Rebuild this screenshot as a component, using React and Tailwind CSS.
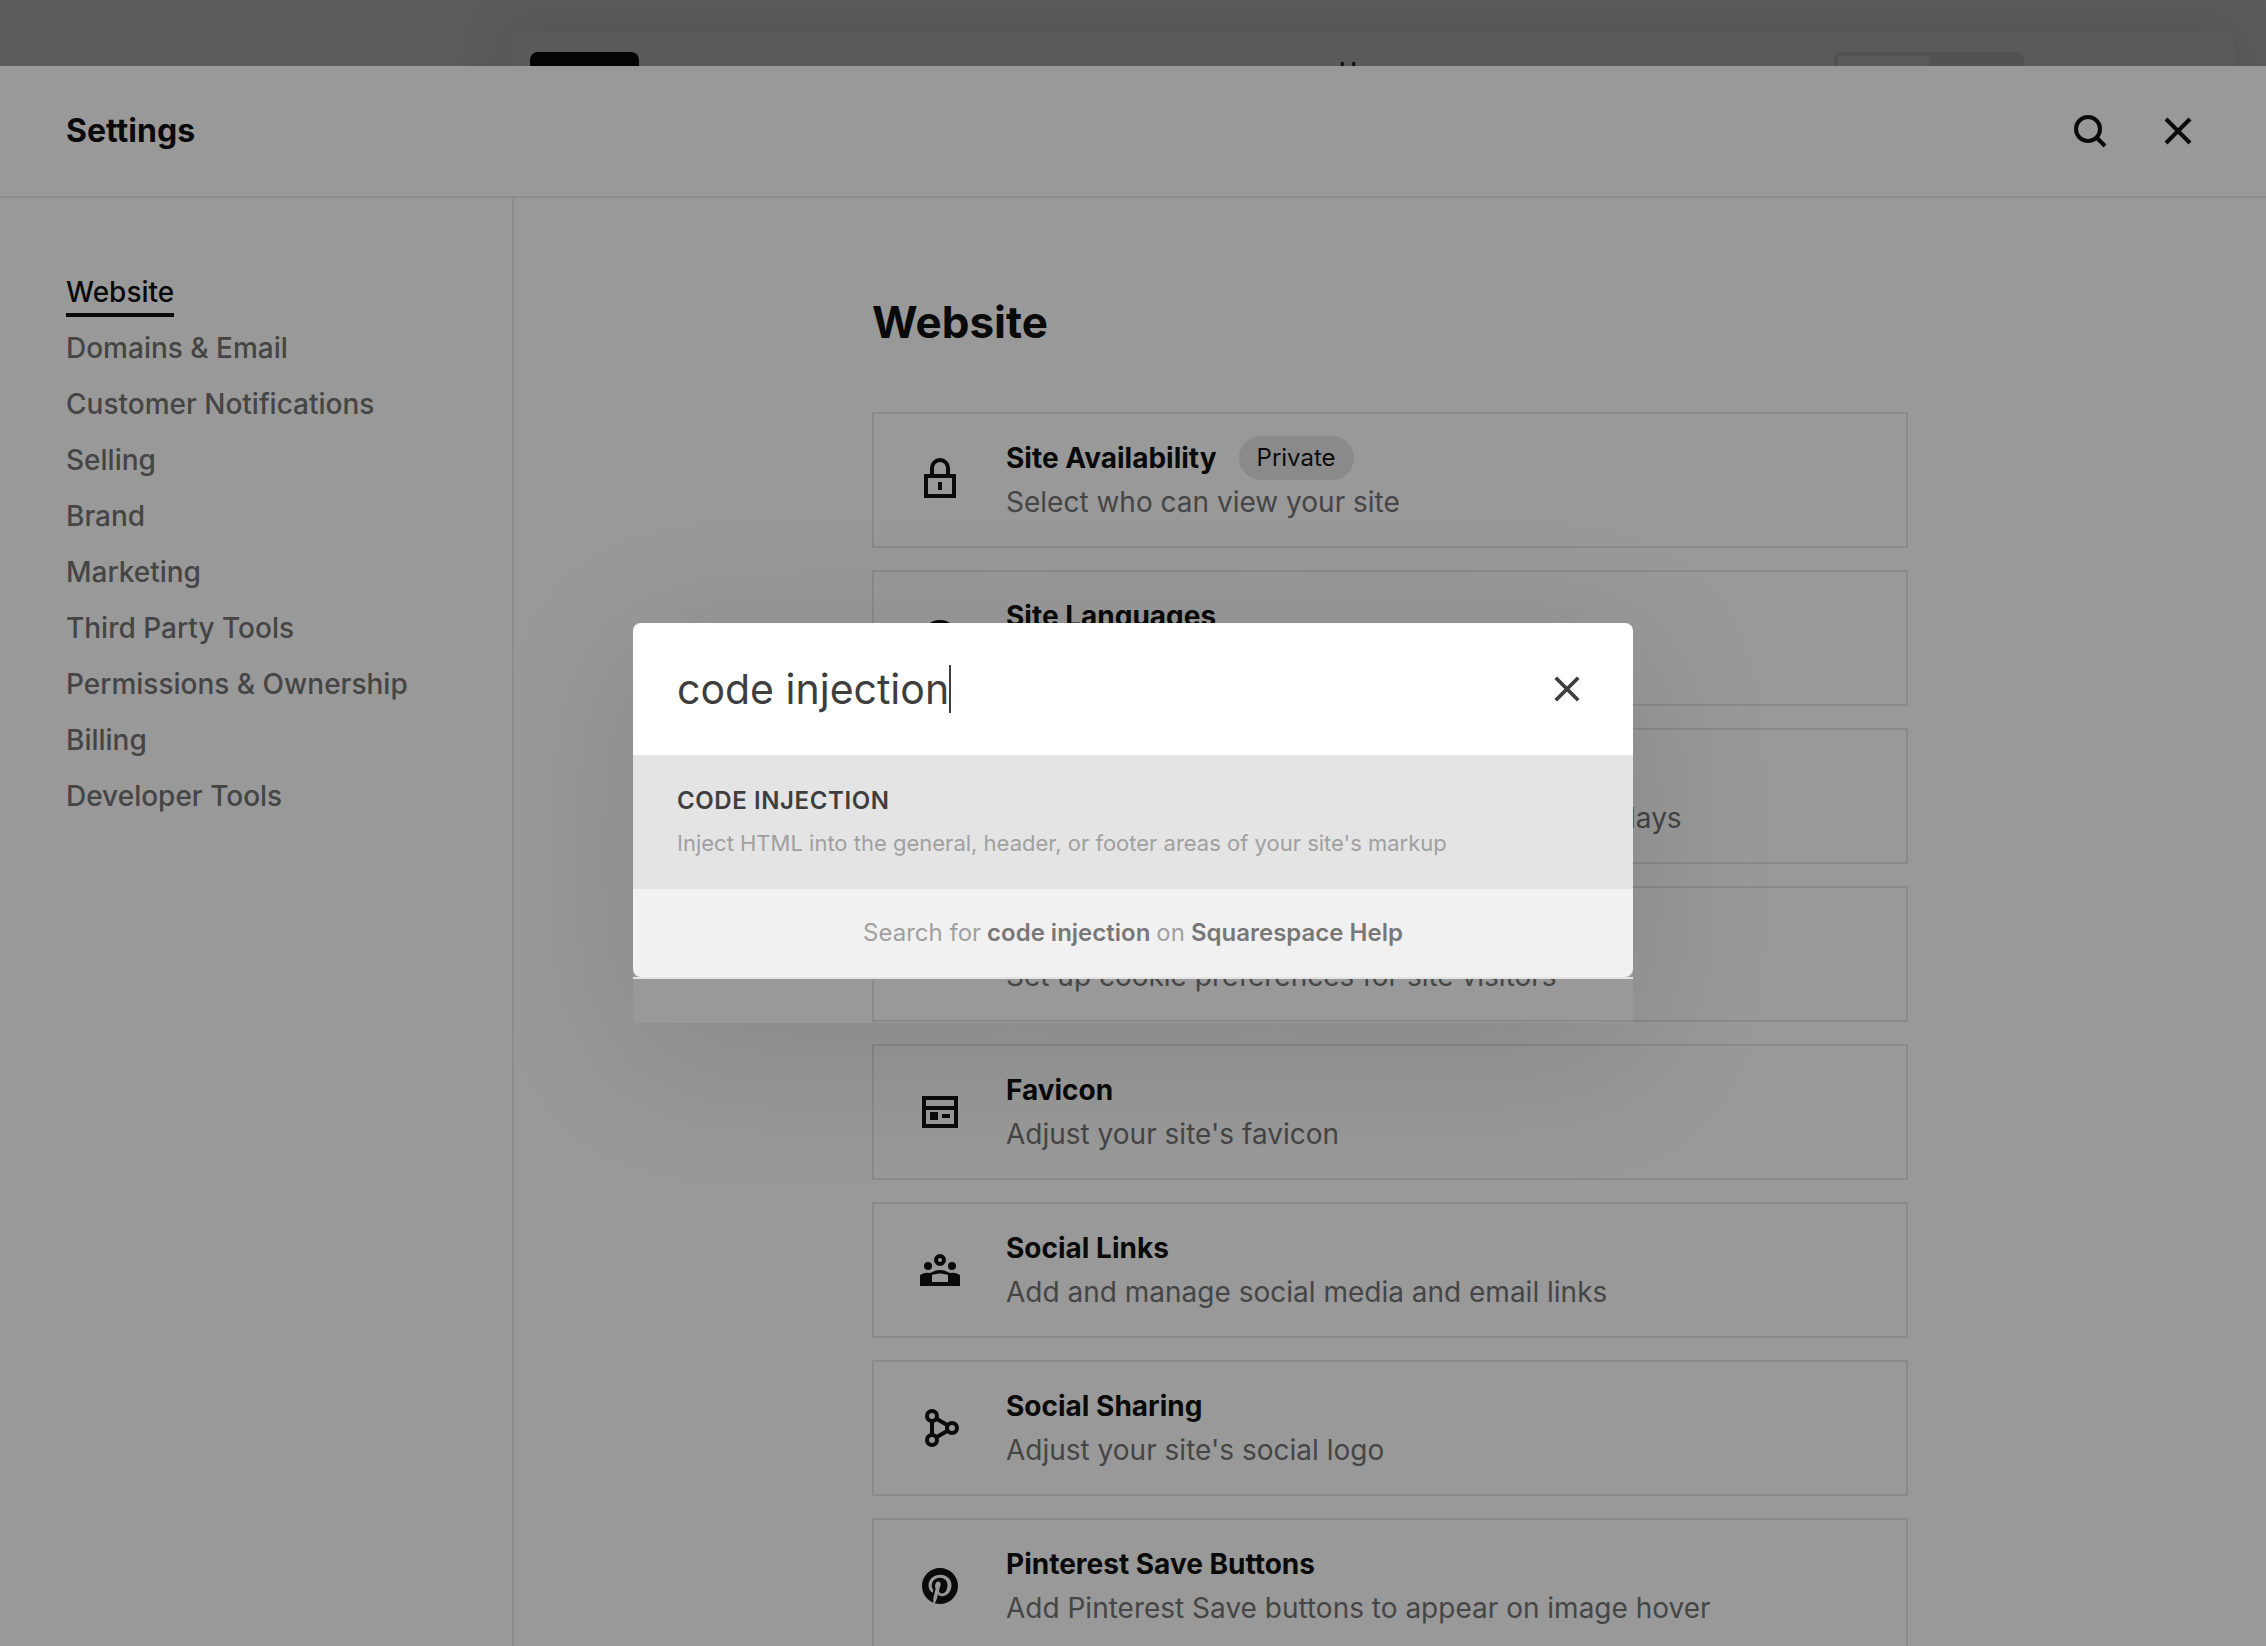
import React, { useState } from 'react';
import { clsx } from 'clsx';

const NAV_ITEMS = [
  'Website',
  'Domains & Email',
  'Customer Notifications',
  'Selling',
  'Brand',
  'Marketing',
  'Third Party Tools',
  'Permissions & Ownership',
  'Billing',
  'Developer Tools',
];

const CARDS = [
  { icon: 'lock', title: 'Site Availability', text: 'Select who can view your site', badge: 'Private' },
  { icon: 'globe', title: 'Site Languages', text: 'Manage the languages on your site' },
  { icon: 'file', title: 'Language & Region', text: 'Set the timezone and units which your site displays' },
  { icon: 'file', title: 'Cookies & Visitor Data', text: 'Set up cookie preferences for site visitors' },
  { icon: 'favicon', title: 'Favicon', text: "Adjust your site's favicon" },
  { icon: 'people', title: 'Social Links', text: 'Add and manage social media and email links' },
  { icon: 'share', title: 'Social Sharing', text: "Adjust your site's social logo" },
  { icon: 'pinterest', title: 'Pinterest Save Buttons', text: 'Add Pinterest Save buttons to appear on image hover' },
];

function CardIcon({ name }) {
  const props = { viewBox: '0 0 44 44', className: 'h-11 w-11 shrink-0', fill: 'none', stroke: 'currentColor', 'aria-hidden': true };
  if (name === 'lock') {
    return (
      <svg {...props} strokeWidth="4">
        <path d="M8 18h28v20H8z" />
        <path d="M14 17v-7a8 8 0 0 1 16 0v7" />
        <path d="M22 24v8" />
      </svg>
    );
  }
  if (name === 'globe') {
    return (
      <svg {...props} strokeWidth="4">
        <circle cx="22" cy="22" r="16" />
        <path d="M6 22h32M22 6c-9 9-9 23 0 32c9-9 9-23 0-32" />
      </svg>
    );
  }
  if (name === 'favicon') {
    return (
      <svg {...props} strokeWidth="4">
        <path d="M6 8h32v28H6zM6 18h32" />
        <path d="M12 22h8v8h-8zM24 24h8v4h-8z" fill="currentColor" stroke="none" />
      </svg>
    );
  }
  if (name === 'people') {
    return (
      <svg {...props} strokeWidth="4">
        <circle cx="22" cy="12" r="4" />
        <circle cx="10" cy="18" r="4" fill="currentColor" stroke="none" />
        <circle cx="34" cy="18" r="4" fill="currentColor" stroke="none" />
        <path
          d="M2 27q5-3 10-2q10-6 20 0q5-1 10 2v11H2zM14 27v7h16v-7q-8-3-16 0z"
          fill="currentColor"
          fillRule="evenodd"
          stroke="none"
        />
      </svg>
    );
  }
  if (name === 'share') {
    return (
      <svg {...props} strokeWidth="4">
        <circle cx="14" cy="10" r="5" />
        <circle cx="14" cy="34" r="5" />
        <circle cx="34" cy="22" r="5" />
        <path d="M14 15v14M18 12.500l12 7M18 31.500l12-7" />
      </svg>
    );
  }
  if (name === 'pinterest') {
    return (
      <svg {...props}>
        <path
          transform="translate(4 4) scale(1.5)"
          fill="currentColor"
          stroke="none"
          d="M12 0C5.373 0 0 5.372 0 12c0 5.084 3.163 9.426 7.627 11.174-.105-.949-.2-2.405.042-3.441.218-.937 1.407-5.965 1.407-5.965s-.359-.719-.359-1.782c0-1.668.967-2.914 2.171-2.914 1.023 0 1.518.769 1.518 1.690 0 1.029-.655 2.568-.994 3.995-.283 1.194.599 2.169 1.777 2.169 2.133 0 3.772-2.249 3.772-5.495 0-2.873-2.064-4.882-5.012-4.882-3.414 0-5.418 2.561-5.418 5.207 0 1.031.397 2.138.893 2.738.098.119.112.224.083.345l-.333 1.360c-.053.220-.174.267-.402.161-1.499-.698-2.436-2.889-2.436-4.649 0-3.785 2.750-7.262 7.929-7.262 4.163 0 7.398 2.967 7.398 6.931 0 4.136-2.607 7.464-6.227 7.464-1.216 0-2.359-.631-2.750-1.378l-.748 2.853c-.271 1.043-1.002 2.350-1.492 3.146 1.124.347 2.317.535 3.554.535 6.627 0 12-5.373 12-12 0-6.628-5.373-12-12-12z"
        />
      </svg>
    );
  }
  return (
    <svg {...props} strokeWidth="4">
      <path d="M8 6h28v32H8zM14 16h16M14 24h16" />
    </svg>
  );
}

function CloseIcon({ className }) {
  return (
    <svg viewBox="0 0 32 32" className={className} fill="none" stroke="currentColor" strokeWidth="4" aria-hidden="true">
      <path d="M4 4l24 24M28 4L4 28" />
    </svg>
  );
}

function SettingCard({ card }) {
  return (
    <li>
      <button type="button" className="flex h-[136px] w-full items-center border-2 border-[#8a8a8a] pl-[44px] text-left">
        <CardIcon name={card.icon} />
        <span className="ml-[44px] flex flex-col">
          <span className="flex h-11 items-center text-[28px] font-bold text-[#0a0a0a]">
            {card.title}
            {card.badge && (
              <span className="ml-[22px] flex h-11 items-center rounded-full bg-[#8a8a8a] px-[18px] text-2xl font-normal">
                {card.badge}
              </span>
            )}
          </span>
          <span className="h-11 text-[28px] leading-[44px] text-[#454545]">{card.text}</span>
        </span>
      </button>
    </li>
  );
}

// Strip of the site preview that stays visible above the settings panel
function PreviewStrip() {
  return (
    <div className="h-[66px] overflow-hidden bg-[#5b5b5b] pt-8 pr-8 pl-[512px]">
      <div className="grid h-[68px] grid-cols-3 bg-[#5a5a5a] px-[18px] pt-[20px] shadow-[0_0_60px_rgba(0,0,0,0.12)]">
        <div className="h-[60px] w-[109px] rounded-lg bg-[#040404]" />
        <span className="pt-1 text-center text-2xl font-medium text-[#0c0c0c]">Home</span>
        <div className="mr-[192px] h-[60px] w-[190px] justify-self-end rounded-lg bg-[#525252] p-1">
          <div className="h-full w-[91px] rounded-sm bg-[#5a5a5a]" />
        </div>
      </div>
    </div>
  );
}

function SearchDialog({ query, onChange }) {
  return (
    <div
      role="dialog"
      aria-label="Search settings"
      className="absolute inset-x-0 top-[623px] mx-auto h-[400px] w-[1000px] rounded-t-lg shadow-[0_30px_150px_rgba(0,0,0,0.13)]"
    >
      <div className="border-b-2 border-[#e3e3e3]">
        <div className="flex h-[132px] items-center rounded-t-lg bg-white px-11">
          <input
            type="text"
            aria-label="Search"
            value={query}
            onChange={(event) => onChange(event.target.value)}
            className="field-sizing-content bg-transparent text-[41px] leading-[48px] text-[#3e3e3e] caret-transparent outline-none"
          />
          <span className="h-12 w-[2px] bg-[#3e3e3e]" />
          <button type="button" aria-label="Clear search" className="ml-auto text-[#3e3e3e]">
            <CloseIcon className="h-11 w-11 p-[7px]" />
          </button>
        </div>
        <button type="button" className="block h-[134px] w-full bg-[#e4e4e4] px-11 text-left">
          <span className="block text-2xl leading-[42px] font-semibold tracking-wide text-[#3e3e3e] uppercase">Code Injection</span>
          <span className="block text-[22px] leading-[42px] text-[#a0a0a0]">
            Inject HTML into the general, header, or footer areas of your site's markup
          </span>
        </button>
        <a href="#help" className="flex h-[88px] items-center justify-center gap-1.5 rounded-b-lg bg-[#f1f1f1] text-2xl text-[#a0a0a0]">
          <span>Search for</span>
          <b className="font-semibold text-[#787878]">{query}</b>
          <span>on</span>
          <b className="font-semibold text-[#787878]">Squarespace Help</b>
        </a>
      </div>
    </div>
  );
}

export default function App() {
  const [query, setQuery] = useState('code injection');
  const [active, setActive] = useState('Website');

  return (
    <div className="relative flex h-screen flex-col overflow-hidden bg-[#999999] font-[Inter,sans-serif] text-[#0a0a0a]">
      <PreviewStrip />
      <header className="flex h-[132px] shrink-0 items-center justify-between border-b-2 border-[#8d8d8d] px-[66px]">
        <h1 className="text-[32px] font-bold">Settings</h1>
        <div className="flex items-center gap-11">
          <button type="button" aria-label="Search settings">
            <svg viewBox="0 0 44 44" className="h-11 w-11" fill="none" stroke="currentColor" strokeWidth="4" aria-hidden="true">
              <circle cx="20" cy="20" r="12" />
              <path d="M28 28l9 9" />
            </svg>
          </button>
          <button type="button" aria-label="Close settings">
            <CloseIcon className="h-11 w-11 p-1.5" />
          </button>
        </div>
      </header>
      <div className="flex min-h-0 flex-1">
        <nav className="w-[514px] shrink-0 border-r-2 border-[#8d8d8d] pt-[76px] pl-[66px]">
          <ul>
            {NAV_ITEMS.map((item) => (
              <li key={item} className="h-14">
                <a
                  href="#settings"
                  onClick={() => setActive(item)}
                  className={clsx(
                    'block w-fit border-b-4 pb-0.5 text-[28px] leading-[37px] font-medium',
                    item === active ? 'border-[#0a0a0a] text-[#0a0a0a]' : 'border-transparent text-[#454545]'
                  )}
                >
                  {item}
                </a>
              </li>
            ))}
          </ul>
        </nav>
        <main className="flex-1 pt-[88px]">
          <div className="mx-auto w-[1036px]">
            <h2 className="text-[44px] leading-[72px] font-bold">Website</h2>
            <ul className="mt-[54px] flex flex-col gap-[22px]">
              {CARDS.map((card) => (
                <SettingCard key={card.title} card={card} />
              ))}
            </ul>
          </div>
        </main>
      </div>
      <SearchDialog query={query} onChange={setQuery} />
    </div>
  );
}
